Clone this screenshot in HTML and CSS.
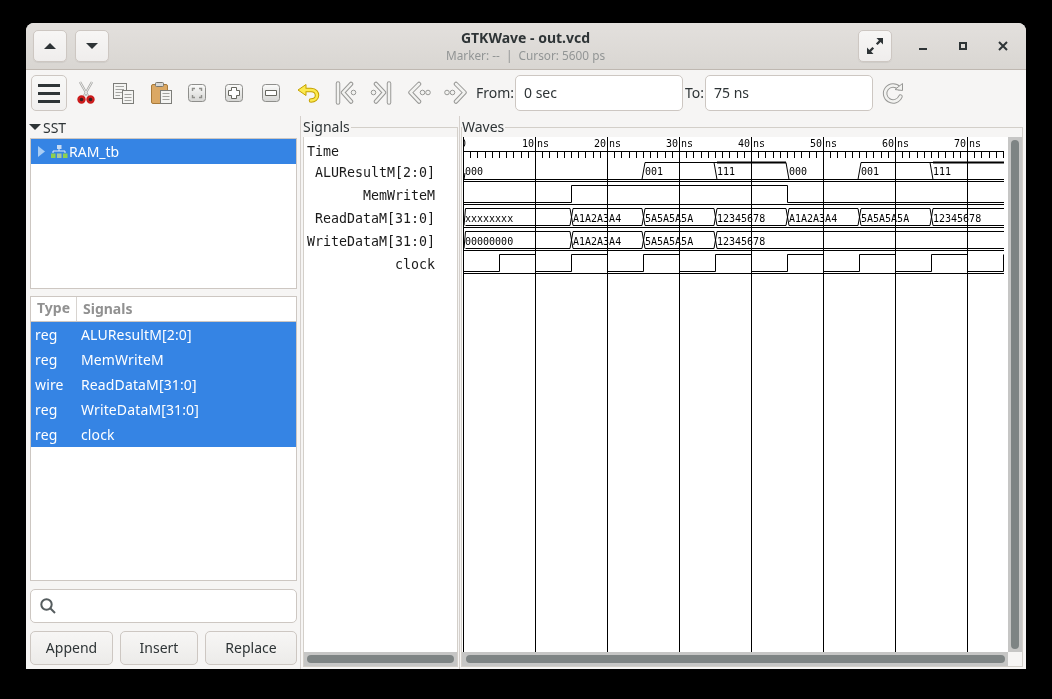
FILE: index.html
```html
<!DOCTYPE html>
<html lang="en">
<head>
  <meta charset="UTF-8">
  <title>GTKWave - out.vcd</title>
  <link rel="stylesheet" href="styles.css">
</head>
<body>

  <svg class="defs" width="0" height="0">
    <symbol id="first" viewBox="0 0 24 24">
      <path class="bevel-out" d="M5 2.500 V21.500"/>
      <path class="bevel-in" d="M5 2.500 V21.500"/>
      <path class="bevel-out" d="M18 3 L10 11.500 L18 20.500"/>
      <path class="bevel-in" d="M18 3 L10 11.500 L18 20.500"/>
      <circle class="dot" cx="20.500" cy="11.500" r="2.300"/>
    </symbol>
    <symbol id="prev" viewBox="0 0 24 24">
      <path class="bevel-out" d="M12 3 L3.500 11.500 L12 20.500"/>
      <path class="bevel-in" d="M12 3 L3.500 11.500 L12 20.500"/>
      <circle class="dot" cx="15.500" cy="11.500" r="2.300"/>
      <circle class="dot" cx="21" cy="11.500" r="2.300"/>
    </symbol>
    <linearGradient id="keycap" x1="0" y1="0" x2="0" y2="1">
      <stop offset="0" stop-color="#fbfbfa"/>
      <stop offset="1" stop-color="#d6d6d4"/>
    </linearGradient>
  </svg>

  <div class="window">

    <header class="headerbar">
      <div class="header-side">
        <button class="hb-btn">
          <svg width="12" height="6"><polygon points="6,0 12,6 0,6"/></svg>
        </button>
        <button class="hb-btn">
          <svg width="12" height="6"><polygon points="0,0 12,0 6,6"/></svg>
        </button>
      </div>
      <div class="title-box">
        <div class="title">GTKWave - out.vcd</div>
        <div class="subtitle">Marker: -- &nbsp;|&nbsp; Cursor: 5600 ps</div>
      </div>
      <div class="header-side header-right">
        <button class="hb-btn expand-btn">
          <svg width="16" height="16">
            <polygon points="9.500,0 16,0 16,6.500 13.600,4.100 10.600,7.100 8.900,5.400 11.900,2.400"/>
            <polygon points="6.500,16 0,16 0,9.500 2.400,11.900 5.400,8.900 7.100,10.600 4.100,13.600"/>
          </svg>
        </button>
        <div class="win-ctl">
          <svg width="10" height="10"><rect x="1" y="7" width="8" height="2"/></svg>
        </div>
        <div class="win-ctl">
          <svg width="10" height="10"><path class="ctl-line" d="M2 2 H8 V8 H2 Z"/></svg>
        </div>
        <div class="win-ctl">
          <svg width="10" height="10"><path class="ctl-line" d="M1 1 L9 9 M9 1 L1 9"/></svg>
        </div>
      </div>
    </header>

    <div class="toolbar">
      <button class="menu-btn">
        <svg width="22" height="19">
          <rect y="0" width="22" height="3"/>
          <rect y="8" width="22" height="3"/>
          <rect y="16" width="22" height="3"/>
        </svg>
      </button>

      <div class="tool">
        <svg width="24" height="24">
          <path d="M6 1 L14 15" stroke="#a5a5a3" stroke-width="2.400"/>
          <path d="M18 1 L10 15" stroke="#a5a5a3" stroke-width="2.400"/>
          <path d="M6 1 L14 15 M18 1 L10 15" stroke="#ececea" stroke-width="1"/>
          <circle cx="7.500" cy="18.500" r="3" fill="#3a2020" stroke="#cc1c1c" stroke-width="2.400"/>
          <circle cx="16.500" cy="18.500" r="3" fill="#3a2020" stroke="#cc1c1c" stroke-width="2.400"/>
        </svg>
      </div>
      <div class="tool">
        <svg width="24" height="24">
          <rect class="sheet" x="2.500" y="2.500" width="13" height="15"/>
          <path class="sheet-lines" d="M4.500 5.500 H13 M4.500 8.500 H13 M4.500 11.500 H13 M4.500 14.500 H9"/>
          <rect class="sheet" x="11.500" y="9.500" width="11" height="13"/>
          <path class="sheet-lines" d="M13.500 13.500 H20.500 M13.500 16.500 H20.500 M13.500 19.500 H20.500"/>
        </svg>
      </div>
      <div class="tool">
        <svg width="24" height="24">
          <rect x="3.500" y="3.500" width="16" height="19" rx="1.500" fill="#dba864" stroke="#a87a3a"/>
          <rect x="7.500" y="1.500" width="8" height="4" rx="1" fill="#d8d8d6" stroke="#77766f"/>
          <rect class="sheet" x="12.500" y="9.500" width="11" height="13"/>
          <path class="sheet-lines" d="M14.500 12.500 H21.500 M14.500 15.500 H21.500 M14.500 18.500 H21.500"/>
        </svg>
      </div>
      <div class="tool">
        <svg width="24" height="24">
          <rect class="keycap" x="3.500" y="3.500" width="17" height="17" rx="3"/>
          <path class="mark-out" d="M10 7.500 H7.500 V10 M14 7.500 H16.500 V10 M10 16.500 H7.500 V14 M14 16.500 H16.500 V14"/>
        </svg>
      </div>
      <div class="tool">
        <svg width="24" height="24">
          <rect class="keycap" x="3.500" y="3.500" width="17" height="17" rx="3"/>
          <path class="key-glyph" d="M9.500 6.500 H14.500 V9.500 H17.500 V14.500 H14.500 V17.500 H9.500 V14.500 H6.500 V9.500 H9.500 Z"/>
        </svg>
      </div>
      <div class="tool">
        <svg width="24" height="24">
          <rect class="keycap" x="3.500" y="3.500" width="17" height="17" rx="3"/>
          <path class="key-glyph" d="M6.500 9.500 H17.500 V14.500 H6.500 Z"/>
        </svg>
      </div>
      <div class="tool">
        <svg width="24" height="24">
          <path class="undo-out" d="M10 9 H15 C19.500 9 21 12 21 14.500 C21 17.500 18.500 19.500 15 19.500"/>
          <path class="undo-head" d="M2 9 L10 3.500 V14.500 Z"/>
          <path class="undo-in" d="M9 9 H15 C19.500 9 21 12 21 14.500 C21 17.500 18.500 19.500 15 19.500"/>
        </svg>
      </div>
      <div class="tool"><svg width="24" height="24"><use href="#first"/></svg></div>
      <div class="tool"><svg class="flip" width="24" height="24"><use href="#first"/></svg></div>
      <div class="tool"><svg width="24" height="24"><use href="#prev"/></svg></div>
      <div class="tool"><svg class="flip" width="24" height="24"><use href="#prev"/></svg></div>

      <label class="range-label from-label">From:</label>
      <input class="range-input" type="text" value="0 sec">
      <label class="range-label to-label">To:</label>
      <input class="range-input" type="text" value="75 ns">
      <div class="reload">
        <svg width="24" height="24">
          <path class="bevel-out" d="M18 7 A8 8 0 1 0 19.500 15.500"/>
          <path class="bevel-in" d="M18 7 A8 8 0 1 0 19.500 15.500"/>
          <path class="reload-head" d="M14 8.500 L21.500 2.500 V9.500 Z"/>
        </svg>
      </div>
    </div>

    <div class="panes">

      <aside class="sst-pane">
        <div class="sst-head">
          <svg width="12" height="6"><polygon points="0,0 12,0 6,6"/></svg>
          <span>SST</span>
        </div>
        <div class="tree box">
          <div class="tree-row">
            <svg class="tree-arrow" width="7" height="11"><polygon points="0,0 7,5.500 0,11"/></svg>
            <svg class="tree-icon" width="17" height="13">
              <rect x="6" y="0" width="4.500" height="4" fill="#c9dcf3"/>
              <path d="M8 4 V6 M2 8 V6 H14 V8" stroke="#dfe9f6" fill="none"/>
              <rect x="0" y="8.500" width="4.500" height="4.500" fill="#8ed04f"/>
              <rect x="6" y="8.500" width="4.500" height="4.500" fill="#a9c79a"/>
              <rect x="12" y="8.500" width="4.500" height="4.500" fill="#8ed04f"/>
            </svg>
            <span>RAM_tb</span>
          </div>
        </div>

        <div class="signal-list box">
          <div class="list-head">
            <div class="col-type">Type</div>
            <div class="col-name">Signals</div>
          </div>
          <div class="list-row"><span class="cell-type">reg</span><span>ALUResultM[2:0]</span></div>
          <div class="list-row"><span class="cell-type">reg</span><span>MemWriteM</span></div>
          <div class="list-row"><span class="cell-type">wire</span><span>ReadDataM[31:0]</span></div>
          <div class="list-row"><span class="cell-type">reg</span><span>WriteDataM[31:0]</span></div>
          <div class="list-row"><span class="cell-type">reg</span><span>clock</span></div>
        </div>

        <div class="search">
          <svg width="16" height="16">
            <circle cx="6.500" cy="6.500" r="5.200"/>
            <path d="M10.500 10.500 L15 15"/>
          </svg>
        </div>

        <div class="actions">
          <button class="act-btn act-append">Append</button>
          <button class="act-btn act-insert">Insert</button>
          <button class="act-btn act-replace">Replace</button>
        </div>
      </aside>

      <div class="sep"></div>

      <fieldset class="frame signals-frame">
        <legend>Signals</legend>
        <div class="names">
          <div class="name-time">Time</div>
          <div class="name">ALUResultM[2:0]</div>
          <div class="name">MemWriteM</div>
          <div class="name">ReadDataM[31:0]</div>
          <div class="name">WriteDataM[31:0]</div>
          <div class="name">clock</div>
        </div>
        <div class="hscroll"><div class="thumb-h"></div></div>
      </fieldset>

      <div class="sep"></div>

      <fieldset class="frame waves-frame">
        <legend>Waves</legend>
        <div class="wave-top">
          <div class="canvas">
            <svg class="wave-svg" width="545" height="516">
              <defs>
                <path id="ticks" d="M7.500 14 V21 M14.500 14 V21 M22.500 14 V21 M29.500 14 V21 M36.500 14 V21 M43.500 14 V21 M50.500 14 V21 M58.500 14 V21 M65.500 14 V21"/>
              </defs>

              <!-- ruler -->
              <path class="trace" d="M0 14.500 H541"/>
              <g class="trace">
                <use href="#ticks"/>
                <use href="#ticks" x="72"/>
                <use href="#ticks" x="144"/>
                <use href="#ticks" x="216"/>
                <use href="#ticks" x="288"/>
                <use href="#ticks" x="360"/>
                <use href="#ticks" x="432"/>
                <path d="M511.500 14 V21 M518.500 14 V21 M526.500 14 V21 M533.500 14 V21 M540.500 14 V21"/>
              </g>

              <!-- time grid -->
              <path class="trace" d="M0.500 0 V516 M72.500 0 V516 M144.500 0 V516 M216.500 0 V516 M288.500 0 V516 M360.500 0 V516 M432.500 0 V516 M504.500 0 V516"/>

              <g class="labels">
                <text x="-3" y="10">0</text>
                <text class="at-end" x="71" y="10">10</text><text x="74" y="10">ns</text>
                <text class="at-end" x="143" y="10">20</text><text x="146" y="10">ns</text>
                <text class="at-end" x="215" y="10">30</text><text x="218" y="10">ns</text>
                <text class="at-end" x="287" y="10">40</text><text x="290" y="10">ns</text>
                <text class="at-end" x="359" y="10">50</text><text x="362" y="10">ns</text>
                <text class="at-end" x="431" y="10">60</text><text x="434" y="10">ns</text>
                <text class="at-end" x="503" y="10">70</text><text x="506" y="10">ns</text>
              </g>

              <!-- row separators -->
              <path class="trace" d="M1 44.500 H541 M1 67.500 H541 M1 90.500 H541 M1 113.500 H541 M1 136.500 H541"/>

              <!-- ALUResultM -->
              <path class="trace" d="M1 42.500 H541"/>
              <path class="trace" d="M179 42.500 L182 25.500 H251 L254 42.500 M323 25.500 L326 42.500 M395 42.500 L398 25.500 H467 L470 42.500"/>
              <path class="trace thick" d="M254 25.500 H323 M470 25.500 H541"/>
              <path class="trace" d="M251 25.500 H254 M467 25.500 H470 M1 42.500 L2 36"/>

              <!-- MemWriteM -->
              <path class="trace" d="M0 65.500 H108.500 V48.500 H324.500 V65.500 H541"/>

              <!-- ReadDataM -->
              <path class="trace" d="M1 88.500 L2.500 71.500 H107 L110 88.500 H179 L182 71.500 H251 L254 88.500 H323 L326 71.500 H395 L398 88.500 H467 L470 71.500 H541"/>
              <path class="trace" d="M2.500 88.500 H107 L110 71.500 H179 L182 88.500 H251 L254 71.500 H323 L326 88.500 H395 L398 71.500 H467 L470 88.500 H541"/>

              <!-- WriteDataM -->
              <path class="trace" d="M1 111.500 L2.500 94.500 H107 L110 111.500 H179 L182 94.500 H251 L254 111.500 H541"/>
              <path class="trace" d="M2.500 111.500 H107 L110 94.500 H179 L182 111.500 H251 L254 94.500 H541"/>

              <!-- clock -->
              <path class="trace" d="M0 134.500 H36.500 V117.500 H72.500 V134.500 H108.500 V117.500 H144.500 V134.500 H180.500 V117.500 H216.500 V134.500 H252.500 V117.500 H288.500 V134.500 H324.500 V117.500 H360.500 V134.500 H396.500 V117.500 H432.500 V134.500 H468.500 V117.500 H504.500 V134.500 H540.500 V117.500"/>

              <g class="labels">
                <text x="2" y="38">000</text>
                <text x="182" y="38">001</text>
                <text x="254" y="38">111</text>
                <text x="326" y="38">000</text>
                <text x="398" y="38">001</text>
                <text x="470" y="38">111</text>

                <text x="2" y="85">xxxxxxxx</text>
                <text x="110" y="85">A1A2A3A4</text>
                <text x="182" y="85">5A5A5A5A</text>
                <text x="254" y="85">12345678</text>
                <text x="326" y="85">A1A2A3A4</text>
                <text x="398" y="85">5A5A5A5A</text>
                <text x="470" y="85">12345678</text>

                <text x="2" y="108">00000000</text>
                <text x="110" y="108">A1A2A3A4</text>
                <text x="182" y="108">5A5A5A5A</text>
                <text x="254" y="108">12345678</text>
              </g>
            </svg>
          </div>
          <div class="vscroll"><div class="thumb-v"></div></div>
        </div>
        <div class="wave-bottom">
          <div class="hscroll wave-hscroll"><div class="thumb-h"></div></div>
          <div class="corner"></div>
        </div>
      </fieldset>

    </div>
  </div>

</body>
</html>
```

FILE: styles.css
```css
* {
  box-sizing: border-box;
}
body {
  margin: 0;
  padding: 23px 26px;
  background: #000;
  font-family: "Noto Sans", sans-serif;
  font-size: 14px;
  color: #2e3436;
}
.defs {
  position: absolute;
}
svg {
  display: block;
}
button {
  font: inherit;
  color: inherit;
  padding: 0 0 2px;
}
.window {
  width: 1000px;
  height: 646px;
  display: flex;
  flex-direction: column;
  background: #f6f5f4;
  border-radius: 8px 8px 0 0;
  overflow: hidden;
  will-change: transform;
}

/* header */
.headerbar {
  height: 47px;
  flex: none;
  display: flex;
  align-items: center;
  padding: 0 6px 1px 7px;
  background: linear-gradient(#e3e0dd, #d9d6d2);
  border-bottom: 1px solid #bfb8b1;
}
.header-side {
  flex: 1 1 0;
  display: flex;
  align-items: center;
  gap: 8px;
}
.header-right {
  justify-content: flex-end;
  gap: 6px;
}
.hb-btn {
  width: 34px;
  height: 32px;
  padding: 0;
  display: flex;
  align-items: center;
  justify-content: center;
  background: linear-gradient(#f7f6f5, #efedec);
  border: 1px solid #cdc7c2;
  border-radius: 5px;
  box-shadow: 0 1px 1px rgba(0, 0, 0, 0.06);
}
.hb-btn polygon {
  fill: #2e3436;
}
.expand-btn {
  margin-right: 8px;
}
.title-box {
  text-align: center;
  margin-left: -2px;
}
.title {
  font-weight: 700;
  line-height: 18px;
}
.subtitle {
  font-size: 11.800px;
  line-height: 16px;
  color: #929595;
}
.win-ctl {
  width: 34px;
  height: 32px;
  display: flex;
  align-items: center;
  justify-content: center;
}
.win-ctl rect {
  fill: #2e3436;
}
.ctl-line {
  fill: none;
  stroke: #2e3436;
  stroke-width: 2;
}

/* toolbar */
.toolbar {
  height: 46px;
  flex: none;
  display: flex;
  align-items: center;
  padding-left: 5px;
}
.menu-btn {
  width: 36px;
  height: 36px;
  padding: 0;
  display: flex;
  align-items: center;
  justify-content: center;
  background: linear-gradient(#f8f8f7, #f1f0ef);
  border: 1px solid #cdc7c2;
  border-radius: 5px;
}
.menu-btn rect {
  fill: #2e3436;
}
.tool {
  width: 37px;
  display: flex;
  justify-content: center;
}
.flip {
  transform: scaleX(-1);
}
.sheet {
  fill: #f4f4f2;
  stroke: #7d7d79;
}
.sheet-lines {
  fill: none;
  stroke: #a3a3a0;
}
.keycap {
  fill: url(#keycap);
  stroke: #8e8e8b;
}
.mark-out {
  fill: none;
  stroke: #8f8f8b;
  stroke-width: 1.400;
}
.key-glyph {
  fill: #fff;
  stroke: #66665f;
}
.undo-out {
  fill: none;
  stroke: #c4a000;
  stroke-width: 4.500;
  stroke-linecap: round;
}
.undo-in {
  fill: none;
  stroke: #fce94f;
  stroke-width: 2.500;
  stroke-linecap: round;
}
.undo-head {
  fill: #fce94f;
  stroke: #c4a000;
  stroke-linejoin: round;
}
.bevel-out {
  fill: none;
  stroke: #989896;
  stroke-width: 4.500;
  stroke-linecap: round;
  stroke-linejoin: round;
}
.bevel-in {
  fill: none;
  stroke: #f2f2f0;
  stroke-width: 2.500;
  stroke-linecap: round;
  stroke-linejoin: round;
}
.dot {
  fill: #f2f2f0;
  stroke: #989896;
}
.reload-head {
  fill: #f2f2f0;
  stroke: #989896;
  stroke-linejoin: round;
}
.range-label {
  line-height: 36px;
}
.from-label {
  width: 41px;
  padding-left: 2px;
}
.to-label {
  width: 22px;
  padding-left: 2px;
}
.range-input {
  width: 168px;
  height: 36px;
  padding: 0 8px 2px;
  font: inherit;
  color: #2e3436;
  background: #fff;
  border: 1px solid #cdc7c2;
  border-radius: 5px;
  outline: none;
}
.reload {
  width: 40px;
  display: flex;
  justify-content: center;
}

/* panes */
.panes {
  flex: 1;
  min-height: 0;
  display: flex;
}
.sep {
  width: 1px;
  flex: none;
  background: #d5d0cc;
}
.sst-pane {
  width: 274px;
  flex: none;
  display: flex;
  flex-direction: column;
  padding: 0 3px 4px 4px;
}
.sst-head {
  height: 22px;
  flex: none;
  display: flex;
  align-items: center;
  gap: 2px;
  margin-left: -1px;
}
.sst-head polygon {
  fill: #2e3436;
}
.box {
  background: #fff;
  border: 1px solid #cdc7c2;
}
.tree {
  height: 151px;
  flex: none;
}
.tree-row {
  height: 25px;
  display: flex;
  align-items: center;
  padding-left: 7px;
  background: #3584e4;
  color: #fff;
}
.tree-arrow {
  fill: #a8cdf5;
}
.tree-icon {
  margin: 0 1px 0 6px;
}
.signal-list {
  flex: 1;
  margin-top: 7px;
}
.list-head {
  height: 25px;
  display: flex;
  align-items: center;
  font-weight: 700;
  color: #919191;
  border-bottom: 1px solid #cdc7c2;
}
.col-type {
  width: 46px;
  height: 24px;
  line-height: 22px;
  padding-left: 6px;
  border-right: 1px solid #d8d4d0;
}
.col-name {
  padding: 0 0 2px 6px;
}
.list-row {
  height: 25px;
  display: flex;
  align-items: center;
  background: #3584e4;
  color: #fff;
  letter-spacing: 0.130px;
}
.cell-type {
  width: 50px;
  padding-left: 4px;
}
.search {
  height: 34px;
  flex: none;
  margin-top: 8px;
  display: flex;
  align-items: center;
  padding-left: 9px;
  background: #fff;
  border: 1px solid #cdc7c2;
  border-radius: 5px;
}
.search svg {
  fill: none;
  stroke: #555c5e;
  stroke-width: 2;
}
.actions {
  flex: none;
  display: flex;
  justify-content: space-between;
  margin-top: 8px;
}
.act-btn {
  height: 34px;
  background: linear-gradient(#f7f6f5, #ecebe9);
  border: 1px solid #cdc7c2;
  border-radius: 5px;
}
.act-append {
  width: 83px;
}
.act-insert {
  width: 78px;
}
.act-replace {
  width: 92px;
}

/* framed views */
.frame {
  margin: 1px 0 2px;
  padding: 0;
  min-width: 0;
  display: flex;
  flex-direction: column;
  border: 1px solid #d3cfc9;
}
.frame legend {
  padding: 0 1px 0 0;
  line-height: 20px;
}
.signals-frame {
  width: 155px;
  margin-left: 2px;
  margin-right: 1px;
  flex: none;
}
.signals-frame legend {
  margin-left: -1px;
}
.waves-frame {
  width: 562px;
  margin-left: 1px;
  flex: none;
}
.names {
  flex: 1;
  padding: 5px 22px 0 3px;
  background: #fff;
  font-family: "DejaVu Sans Mono", monospace;
  font-size: 13.300px;
  color: #1a1a1a;
}
.name-time {
  line-height: 19px;
}
.name {
  line-height: 23px;
  text-align: right;
}
.hscroll {
  height: 14px;
  flex: none;
  padding: 3px;
  background: #c6c6c5;
}
.thumb-h {
  height: 8px;
  background: #7e8484;
  border-radius: 4px;
}
.wave-top {
  flex: 1;
  min-height: 0;
  display: flex;
}
.canvas {
  flex: 1;
  padding-left: 1px;
  background: #fff;
}
.wave-svg {
  font-family: "DejaVu Sans Mono", monospace;
  font-size: 10px;
}
.trace {
  fill: none;
  stroke: #000;
  stroke-width: 1;
}
.thick {
  stroke-width: 2;
}
.labels {
  fill: #000;
}
.at-end {
  text-anchor: end;
}
.vscroll {
  width: 14px;
  flex: none;
  padding: 3px;
  background: #c6c6c5;
}
.thumb-v {
  width: 8px;
  height: 509px;
  background: #7e8484;
  border-radius: 4px;
}
.wave-bottom {
  flex: none;
  display: flex;
}
.wave-hscroll {
  flex: 1;
  padding-left: 4px;
}
.corner {
  width: 14px;
  background: #f6f5f4;
}
```
